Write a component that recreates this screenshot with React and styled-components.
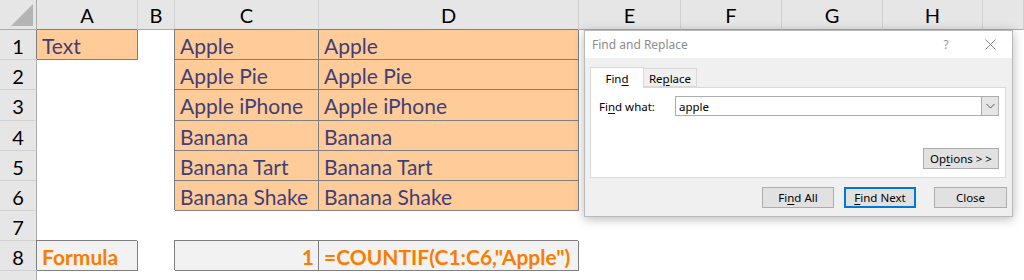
import React from "react";
import styled, { createGlobalStyle, css } from "styled-components";

const GlobalStyle = createGlobalStyle`
  html, body { margin: 0; padding: 0; background: #ffffff; }
  body { width: 1024px; height: 280px; overflow: hidden; }
`;

const Page = styled.div`
  position: relative;
  width: 1024px;
  height: 280px;
  overflow: hidden;
  background: #fff;
`;

const Sheet = styled.div`
  display: grid;
  grid-template-columns: 37px 101px 37px 144px 260px 102px 101px 101px 100px 41px;
  grid-template-rows: 30px 30px 30px 31px 30px 30px 30px 30px 30px 30px;
  font-family: Lato, "Liberation Sans", sans-serif;
  font-size: 21px;
`;

const Corner = styled.div`
  position: relative;
  background: #e6e6e6;
  border-right: 1px solid #ababab;
  border-bottom: 1px solid #ababab;
  &::after {
    content: "";
    position: absolute;
    right: 3px;
    bottom: 3px;
    width: 0;
    height: 0;
    border-left: 22px solid transparent;
    border-bottom: 22px solid #b4b4b4;
  }
`;

const ColHeader = styled.div`
  box-sizing: border-box;
  background: #e6e6e6;
  border-right: 1px solid #d0d0d0;
  border-bottom: 1px solid #ababab;
  color: #000;
  text-align: center;
  font-size: 20px;
  padding-top: 2px;
  line-height: 27px;
`;

const RowHeader = styled.div`
  box-sizing: border-box;
  background: #e6e6e6;
  border-right: 1px solid #ababab;
  border-bottom: 1px solid #d0d0d0;
  color: #000;
  text-align: center;
  font-size: 20px;
  padding-top: 3px;
  line-height: 27px;
  overflow: hidden;
`;

const variants = {
  input: css`
    background: #ffcc99;
    color: #3f3f76;
    border-right: 1px solid #7f7f7f;
    border-bottom: 1px solid #7f7f7f;
    box-shadow: -1px -1px 0 0 #7f7f7f;
  `,
  calc: css`
    background: #f2f2f2;
    color: #fa7d00;
    font-weight: 700;
    border-right: 1px solid #7f7f7f;
    border-bottom: 1px solid #7f7f7f;
    box-shadow: -1px -1px 0 0 #7f7f7f;
  `,
  plain: css`
    background: #fff;
  `,
};

const Cell = styled.div`
  box-sizing: border-box;
  padding: 2px 4px 0 5px;
  line-height: 27px;
  white-space: nowrap;
  overflow: visible;
  text-align: ${(p) => (p.$align === "right" ? "right" : "left")};
  ${(p) => variants[p.$variant || "plain"]}
`;

const Dialog = styled.div`
  position: absolute;
  left: 584px;
  top: 30px;
  width: 429px;
  height: 187px;
  box-sizing: border-box;
  background: #f0f0f0;
  border: 1px solid #b9b9b9;
  box-shadow: 0 2px 10px rgba(0, 0, 0, 0.28);
  display: flex;
  flex-direction: column;
  font-family: "Noto Sans", "Open Sans", sans-serif;
  font-size: 11.5px;
  color: #000;
`;

const TitleBar = styled.div`
  height: 27px;
  background: #fff;
  display: flex;
  align-items: center;
  padding-left: 7px;
`;

const Title = styled.div`
  flex: 1;
  color: #8c8c8c;
  font-size: 12px;
`;

const TitleButton = styled.div`
  width: ${(p) => p.$w}px;
  display: flex;
  align-items: center;
  justify-content: center;
  color: #9a9a9a;
  font-size: 12px;
`;

const Body = styled.div`
  padding: 9px 6px 0 5px;
  display: flex;
  flex-direction: column;
`;

const Tabs = styled.div`
  display: flex;
  align-items: flex-end;
  height: 20px;
`;

const Tab = styled.div`
  box-sizing: border-box;
  width: ${(p) => p.$w}px;
  height: ${(p) => (p.$active ? 21 : 19)}px;
  margin-bottom: ${(p) => (p.$active ? -1 : 0)}px;
  background: ${(p) => (p.$active ? "#fff" : "#f0f0f0")};
  border: 1px solid #d9d9d9;
  border-bottom: ${(p) => (p.$active ? "none" : "1px solid #d9d9d9")};
  border-left: ${(p) => (p.$noLeft ? "none" : "1px solid #d9d9d9")};
  display: flex;
  align-items: center;
  justify-content: center;
  padding-top: 1px;
  position: relative;
  z-index: ${(p) => (p.$active ? 1 : 0)};
`;

const Panel = styled.div`
  box-sizing: border-box;
  height: 91px;
  background: #fff;
  border: 1px solid #d9d9d9;
  display: flex;
  flex-direction: column;
  padding: 8px 6px 8px 8px;
`;

const FieldRow = styled.div`
  display: flex;
  align-items: center;
  height: 20px;
`;

const Label = styled.div`
  width: 76px;
`;

const Combo = styled.div`
  flex: 1;
  box-sizing: border-box;
  height: 20px;
  border: 1px solid #adadad;
  display: flex;
  align-items: center;
  padding-left: 3px;
`;

const ComboText = styled.div`
  flex: 1;
`;

const ComboArrow = styled.div`
  box-sizing: border-box;
  width: 17px;
  height: 18px;
  background: #e5e5e5;
  border-left: 1px solid #adadad;
  display: flex;
  align-items: center;
  justify-content: center;
`;

const OptionsRow = styled.div`
  margin-top: auto;
  display: flex;
  justify-content: flex-end;
`;

const Button = styled.div`
  box-sizing: border-box;
  width: ${(p) => p.$w}px;
  height: 21px;
  background: #e1e1e1;
  border: ${(p) => (p.$default ? "2px solid #0078d7" : "1px solid #adadad")};
  display: flex;
  align-items: center;
  justify-content: center;
  margin-left: ${(p) => p.$ml || 0}px;
`;

const ButtonRow = styled.div`
  display: flex;
  justify-content: flex-end;
  margin-right: -1px;
  margin-top: 9px;
`;

const U = styled.span`
  text-decoration: underline;
  text-underline-offset: 2px;
`;

const CloseIcon = () => (
  <svg width="11" height="11" viewBox="0 0 11 11">
    <path d="M0.5 0.5 L10.5 10.5 M10.5 0.5 L0.5 10.5" stroke="#8a8a8a" strokeWidth="1" fill="none" />
  </svg>
);

const Chevron = () => (
  <svg width="9" height="6" viewBox="0 0 9 6">
    <path d="M0.5 1 L4.5 5 L8.5 1" stroke="#555" strokeWidth="1" fill="none" />
  </svg>
);

const cols = ["A", "B", "C", "D", "E", "F", "G", "H", ""];

const rows = [
  ["Text", "", "Apple", "Apple"],
  ["", "", "Apple Pie", "Apple Pie"],
  ["", "", "Apple iPhone", "Apple iPhone"],
  ["", "", "Banana", "Banana"],
  ["", "", "Banana Tart", "Banana Tart"],
  ["", "", "Banana Shake", "Banana Shake"],
  ["", "", "", ""],
  ["Formula", "", "1", '=COUNTIF(C1:C6,"Apple")'],
  ["", "", "", ""],
];

function variantFor(r, c) {
  if (r === 0 && c === 0) return "input";
  if (r >= 0 && r <= 5 && (c === 2 || c === 3)) return "input";
  if (r === 7 && (c === 0 || c === 2 || c === 3)) return "calc";
  return "plain";
}

export default function App() {
  return (
    <Page>
      <GlobalStyle />
      <Sheet>
        <Corner />
        {cols.map((c, i) => (
          <ColHeader key={"h" + i}>{c}</ColHeader>
        ))}
        {rows.map((row, r) => (
          <React.Fragment key={"r" + r}>
            <RowHeader>{r < 8 ? r + 1 : ""}</RowHeader>
            {cols.map((_, c) => (
              <Cell
                key={c}
                $variant={variantFor(r, c)}
                $align={r === 7 && c === 2 ? "right" : "left"}
              >
                {row[c] || ""}
              </Cell>
            ))}
          </React.Fragment>
        ))}
      </Sheet>

      <Dialog>
        <TitleBar>
          <Title>Find and Replace</Title>
          <TitleButton $w={44}>?</TitleButton>
          <TitleButton $w={44}>
            <CloseIcon />
          </TitleButton>
        </TitleBar>
        <Body>
          <Tabs>
            <Tab $w={54} $active>
              Fin<U>d</U>
            </Tab>
            <Tab $w={53} $noLeft>
              Re<U>p</U>lace
            </Tab>
          </Tabs>
          <Panel>
            <FieldRow>
              <Label>
                Fi<U>n</U>d what:
              </Label>
              <Combo>
                <ComboText>apple</ComboText>
                <ComboArrow>
                  <Chevron />
                </ComboArrow>
              </Combo>
            </FieldRow>
            <OptionsRow>
              <Button $w={76}>
                Op<U>t</U>ions &gt; &gt;
              </Button>
            </OptionsRow>
          </Panel>
          <ButtonRow>
            <Button $w={72}>
              Fi<U>n</U>d All
            </Button>
            <Button $w={72} $ml={10} $default>
              <U>F</U>ind Next
            </Button>
            <Button $w={73} $ml={18}>
              Close
            </Button>
          </ButtonRow>
        </Body>
      </Dialog>
    </Page>
  );
}
